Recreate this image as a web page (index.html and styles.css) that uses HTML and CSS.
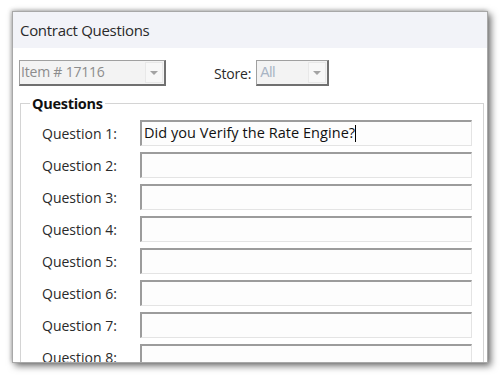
FILE: index.html
```html
<!DOCTYPE html>
<html>
<head>
<meta charset="utf-8">
<link rel="stylesheet" href="styles.css">
</head>
<body>
<div class="window">
  <div class="titlebar">Contract Questions</div>
  <div class="content">
    <div class="toprow">
      <div class="combo combo-item"><span class="combo-text">Item # 17116</span><span class="combo-btn"><span class="arrow"></span></span></div>
      <span class="store-label">Store:</span>
      <div class="combo combo-store"><span class="combo-text store-text">All</span><span class="combo-btn"><span class="arrow"></span></span></div>
    </div>
    <fieldset class="group">
      <legend class="group-title">Questions</legend>
      <div class="qgrid">
        <label class="qlabel">Question 1:</label><div class="qinput">Did you Verify the Rate Engine?<span class="caret"></span></div>
        <label class="qlabel">Question 2:</label><div class="qinput"></div>
        <label class="qlabel">Question 3:</label><div class="qinput"></div>
        <label class="qlabel">Question 4:</label><div class="qinput"></div>
        <label class="qlabel">Question 5:</label><div class="qinput"></div>
        <label class="qlabel">Question 6:</label><div class="qinput"></div>
        <label class="qlabel">Question 7:</label><div class="qinput"></div>
        <label class="qlabel">Question 8:</label><div class="qinput"></div>
      </div>
    </fieldset>
  </div>
</div>
</body>
</html>
```
FILE: styles.css
```css
html, body {
  margin: 0;
  padding: 0;
  background: #ffffff;
}
body {
  font-family: "Open Sans", "Noto Sans", sans-serif;
  color: #222;
  width: 500px;
  height: 375px;
  overflow: hidden;
}
.window {
  margin: 11px 0 0 12px;
  width: 474px;
  height: 350px;
  border: 1px solid #a8a8a8;
  background: #ffffff;
  box-shadow: 3px 3px 7px rgba(0,0,0,0.55), -1px -1px 4px rgba(0,0,0,0.25);
  overflow: hidden;
  box-sizing: content-box;
}
.titlebar {
  height: 36px;
  background: #f2f3f8;
  font-size: 15px;
  line-height: 36px;
  padding-left: 7px;
  color: #2a2a2a;
  letter-spacing: -0.3px;
}
.content {
  padding: 12px 0 0 6px;
}
.toprow {
  display: flex;
  align-items: center;
  height: 26px;
}
.combo {
  display: flex;
  height: 26px;
  box-sizing: border-box;
  border-top: 1px solid #a0a0a0;
  border-left: 1px solid #a0a0a0;
  border-right: 2px solid #707070;
  border-bottom: 2px solid #707070;
  background: #f3f3f3;
}
.combo-item {
  width: 147px;
}
.combo-store {
  width: 73px;
}
.combo-text {
  flex: 1;
  font-size: 14px;
  line-height: 22px;
  padding-left: 1px;
  color: #8c8c8c;
  letter-spacing: -0.2px;
}
.store-text {
  color: #a8b4c4;
  font-family: "Liberation Sans", sans-serif;
  padding-left: 3px;
}
.combo-btn {
  width: 18px;
  margin: 1px 1px 1px 0;
  box-sizing: border-box;
  border: 1px solid #e8e8e8;
  background: #f7f7f7;
  display: flex;
  align-items: center;
  justify-content: center;
}
.arrow {
  width: 0;
  height: 0;
  border-left: 4px solid transparent;
  border-right: 4px solid transparent;
  border-top: 4px solid #a3a3a3;
}
.store-label {
  font-size: 14px;
  margin-left: 48px;
  margin-right: 5px;
  color: #2a2a2a;
  letter-spacing: -0.2px;
}
.group {
  margin: 8px 3px 0 1px;
  border: 1px solid #d4d4d4;
  box-shadow: inset 1px 1px 0 #ffffff;
  padding: 7px 11px 0 21px;
  min-width: 0;
}
.group-title {
  font-weight: bold;
  font-size: 14.5px;
  padding: 0 2px;
  margin-left: -12px;
  color: #111;
  letter-spacing: -0.3px;
}
.qgrid {
  display: grid;
  grid-template-columns: 98px 332px;
  grid-auto-rows: 26px;
  row-gap: 6px;
  align-items: center;
}
.qlabel {
  font-size: 14px;
  color: #2a2a2a;
  letter-spacing: 0;
}
.qinput {
  height: 26px;
  box-sizing: border-box;
  border-top: 2px solid #9c9c9c;
  border-left: 2px solid #9c9c9c;
  border-right: 1px solid #e4e4e4;
  border-bottom: 1px solid #e4e4e4;
  background: #fdfdfd;
  font-size: 14.5px;
  line-height: 22px;
  padding-left: 2px;
  color: #111;
  white-space: nowrap;
  letter-spacing: 0.05px;
}
.caret {
  display: inline-block;
  width: 1px;
  height: 17px;
  background: #000;
  vertical-align: -4px;
}
```
